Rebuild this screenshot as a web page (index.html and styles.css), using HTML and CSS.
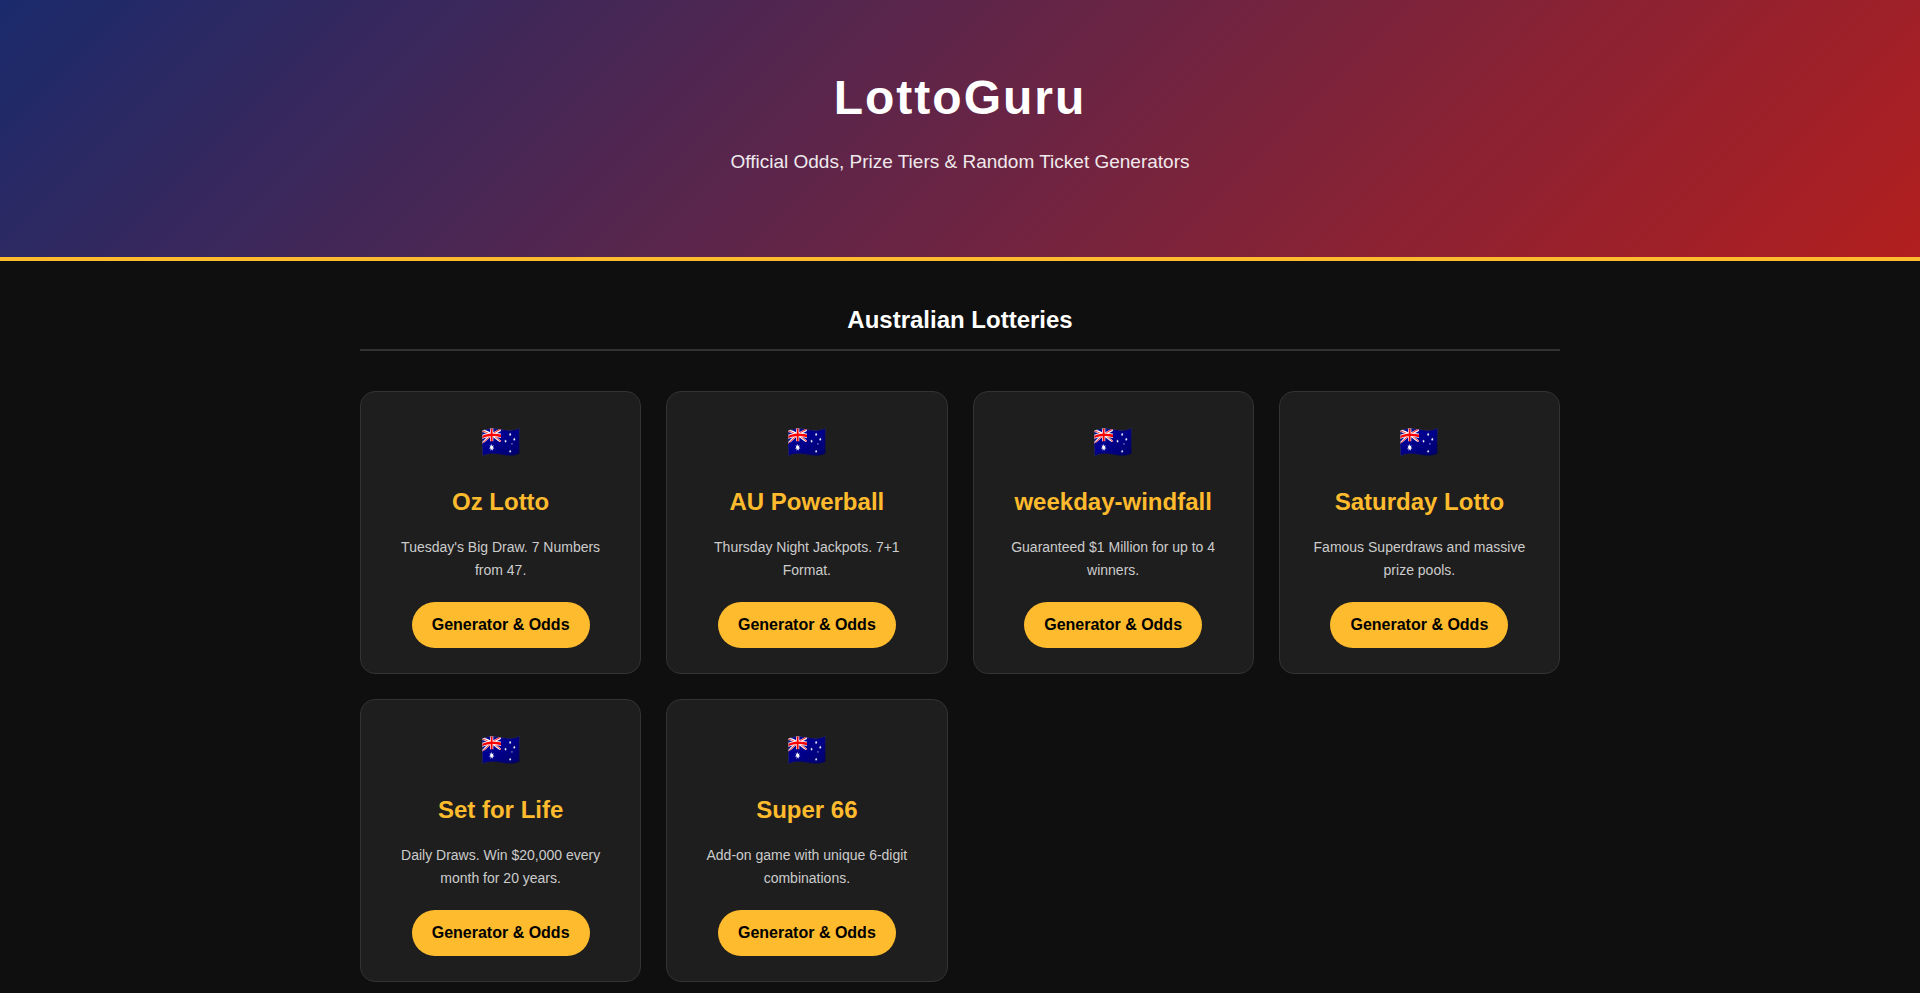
FILE: index.html
```
<!DOCTYPE html>
<html lang="en">
<head>
    <meta charset="UTF-8">
    <meta name="viewport" content="width=device-width, initial-scale=1.0">
    <title>LottoGuru</title>
    <link rel="stylesheet" href="styles.css">
</head>
<body>
    <header>
        <h1>LottoGuru</h1>
        <p>Official Odds, Prize Tiers &amp; Random Ticket Generators</p>
    </header>

    <main class="container">
        <h2 class="section-title">Australian Lotteries</h2>

        <div class="grid">
            <div class="card">
                <div class="flag">🇦🇺</div>
                <h3>Oz Lotto</h3>
                <p>Tuesday's Big Draw. 7 Numbers from 47.</p>
                <a href="#oz-lotto" class="btn">Generator &amp; Odds</a>
            </div>

            <div class="card">
                <div class="flag">🇦🇺</div>
                <h3>AU Powerball</h3>
                <p>Thursday Night Jackpots. 7+1 Format.</p>
                <a href="#au-powerball" class="btn">Generator &amp; Odds</a>
            </div>

            <div class="card">
                <div class="flag">🇦🇺</div>
                <h3>weekday-windfall</h3>
                <p>Guaranteed $1 Million for up to 4 winners.</p>
                <a href="#weekday-windfall" class="btn">Generator &amp; Odds</a>
            </div>

            <div class="card">
                <div class="flag">🇦🇺</div>
                <h3>Saturday Lotto</h3>
                <p>Famous Superdraws and massive prize pools.</p>
                <a href="#saturday-lotto" class="btn">Generator &amp; Odds</a>
            </div>

            <div class="card">
                <div class="flag">🇦🇺</div>
                <h3>Set for Life</h3>
                <p>Daily Draws. Win $20,000 every month for 20 years.</p>
                <a href="#set-for-life" class="btn">Generator &amp; Odds</a>
            </div>

            <div class="card">
                <div class="flag">🇦🇺</div>
                <h3>Super 66</h3>
                <p>Add-on game with unique 6-digit combinations.</p>
                <a href="#super-66" class="btn">Generator &amp; Odds</a>
            </div>
        </div>
    </main>
</body>
</html>
```
FILE: styles.css
```
:root {
    --bg: #0f0f0f;
    --card: #1e1e1e;
    --gold: #fdbb2d;
    --line: #333333;
    --text: #ffffff;
    --text-secondary: #cccccc;
}

* {
    margin: 0;
    padding: 0;
    box-sizing: border-box;
}

body {
    font-family: 'Liberation Sans', Arial, sans-serif;
    background-color: var(--bg);
    color: var(--text);
}

header {
    background: linear-gradient(135deg, #1a2a6c, #b21f1f);
    border-bottom: 4px solid var(--gold);
    padding: 60px 20px 80px;
    text-align: center;
}

header h1 {
    font-size: 48px;
    line-height: 76px;
    letter-spacing: 2px;
    margin-bottom: 10px;
}

header p {
    font-size: 19px;
    line-height: 31px;
    opacity: 0.9;
}

.container {
    max-width: 1240px;
    margin: 0 auto;
    padding: 40px 20px;
}

.section-title {
    font-size: 24px;
    line-height: 38px;
    text-align: center;
    padding-bottom: 10px;
    border-bottom: 2px solid var(--line);
    margin-bottom: 40px;
}

.grid {
    display: grid;
    grid-template-columns: repeat(auto-fill, minmax(250px, 1fr));
    gap: 25px;
}

.card {
    background-color: var(--card);
    border: 1px solid var(--line);
    border-radius: 15px;
    padding: 25px;
    text-align: center;
    transition: all 0.3s ease;
}

.card:hover {
    border-color: var(--gold);
}

.flag {
    font-size: 32px;
    line-height: 51px;
    margin-bottom: 15px;
}

.card h3 {
    color: var(--gold);
    font-size: 24px;
    line-height: 38px;
    margin-bottom: 15px;
}

.card p {
    color: var(--text-secondary);
    font-size: 14px;
    line-height: 23px;
    margin-bottom: 20px;
}

.btn {
    display: inline-block;
    vertical-align: top;
    background-color: var(--gold);
    color: #000000;
    font-size: 16px;
    font-weight: bold;
    line-height: 26px;
    padding: 10px 20px;
    border-radius: 25px;
    text-decoration: none;
}

.btn:hover {
    background-color: #ffcc55;
}
```
